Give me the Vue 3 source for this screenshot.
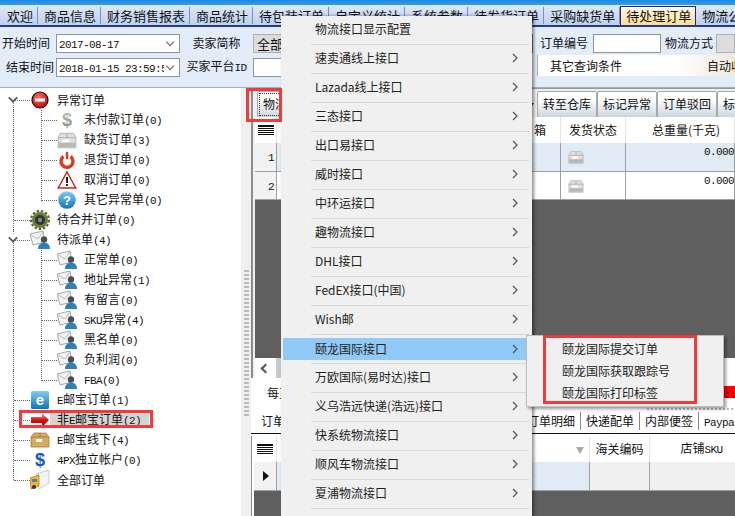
<script setup>
import { h } from 'vue'

const Tx = (p) =>
  (p.t.match(/[\x00-\x7f]+|[^\x00-\x7f]+/g) || []).map((s) =>
    /[\x00-\x7f]/.test(s) ? h('span', { class: 'lat' }, s) : s
  )
Tx.props = ['t']

const tabs = [
  { t: '欢迎' }, { t: '商品信息' }, { t: '财务销售报表' }, { t: '商品统计' }, { t: '待包装订单' },
  { t: '自定义统计' }, { t: '系统参数' }, { t: '待发货订单' }, { t: '采购缺货单' },
  { t: '待处理订单', on: true }, { t: '物流公司' }
]

const tree = [
  { t: '异常订单', i: 'stop', root: 1, exp: 1 },
  { t: '未付款订单(0)', i: 'dollar-g' },
  { t: '缺货订单(3)', i: 'box-g' },
  { t: '退货订单(0)', i: 'power' },
  { t: '取消订单(0)', i: 'warn' },
  { t: '其它异常单(0)', i: 'help', end: 1 },
  { t: '待合并订单(0)', i: 'gear', root: 1 },
  { t: '待派单(4)', i: 'mail', root: 1, exp: 1 },
  { t: '正常单(0)', i: 'mail' },
  { t: '地址异常(1)', i: 'mail' },
  { t: '有留言(0)', i: 'mail' },
  { t: 'SKU异常(4)', i: 'mail' },
  { t: '黑名单(0)', i: 'mail' },
  { t: '负利润(0)', i: 'mail' },
  { t: 'FBA(0)', i: 'mail', end: 1 },
  { t: 'E邮宝订单(1)', i: 'ie', root: 1 },
  { t: '非E邮宝订单(2)', i: 'arrow', root: 1, sel: 1 },
  { t: 'E邮宝线下(4)', i: 'box-t', root: 1 },
  { t: '4PX独立帐户(0)', i: 'dollar-b', root: 1 },
  { t: '全部订单', i: 'truck', root: 1, end: 1 }
]

const menu = [
  { t: '物流接口显示配置' }, { t: '速卖通线上接口', sub: 1 }, { t: 'Lazada线上接口', sub: 1 },
  { t: '三态接口', sub: 1 }, { t: '出口易接口', sub: 1 }, { t: '威时接口', sub: 1 },
  { t: '中环运接口', sub: 1 }, { t: '趣物流接口', sub: 1 }, { t: 'DHL接口', sub: 1 },
  { t: 'FedEX接口(中国)', sub: 1 }, { t: 'Wish邮', sub: 1 }, { t: '颐龙国际接口', sub: 1, on: 1 },
  { t: '万欧国际(易时达)接口', sub: 1 }, { t: '义乌浩远快递(浩远)接口', sub: 1 },
  { t: '快系统物流接口', sub: 1 }, { t: '顺风车物流接口', sub: 1 }, { t: '夏浦物流接口', sub: 1 },
  { t: '', sub: 0 }
]

const submenu = ['颐龙国际提交订单', '颐龙国际获取跟踪号', '颐龙国际打印标签']
const lowerTabs = ['订单明细', '快递配单', '内部便签', 'Paypal']
</script>

<template>
  <div class="app">
    <svg class="sprite" width="0" height="0">
      <defs>
        <radialGradient id="gr" cx=".4" cy=".3" r=".8"><stop offset="0" stop-color="#ff6a5a"/><stop offset="1" stop-color="#c80000"/></radialGradient>
        <linearGradient id="gb" x1="0" y1="0" x2="0" y2="1"><stop offset="0" stop-color="#7fd0f0"/><stop offset="1" stop-color="#1072b8"/></linearGradient>
        <linearGradient id="ga" x1="0" y1="0" x2="0" y2="1"><stop offset="0" stop-color="#f7b0a0"/><stop offset=".5" stop-color="#d81010"/><stop offset="1" stop-color="#8c0000"/></linearGradient>
        <linearGradient id="gd" x1="0" y1="0" x2="0" y2="1"><stop offset="0" stop-color="#c4c8c4"/><stop offset="1" stop-color="#7e847e"/></linearGradient>
        <symbol id="stop" viewBox="0 0 20 20"><circle cx="10" cy="10" r="8" fill="url(#gr)" stroke="#111" stroke-width="1.200"/><rect x="5" y="8.500" width="10" height="3" fill="#fff"/></symbol>
        <symbol id="dollar-g" viewBox="0 0 20 20"><text x="10" y="16" text-anchor="middle" font-family="Liberation Sans" font-weight="700" font-size="18" fill="url(#gd)">$</text></symbol>
        <symbol id="box-g" viewBox="0 0 18 18"><path d="M3 3h12l2 4v9H1V7z" fill="#e0e0e0" stroke="#b0b0b0" stroke-width=".8"/><path d="M1 7h16M9 3v4" stroke="#b0b0b0"/><rect x="1.500" y="11.500" width="15" height="4" fill="#b8b8b8"/><rect x="5" y="8.500" width="6" height="2.500" fill="#fff"/></symbol>
        <symbol id="power" viewBox="0 0 20 20"><path d="M6.500 6.500a6 6 0 1 0 7 0" fill="none" stroke="#e2361f" stroke-width="3.400"/><rect x="8.800" y="2" width="2.400" height="7" fill="#e2361f"/></symbol>
        <symbol id="warn" viewBox="0 0 20 20"><path d="M10 2 18.800 18H1.200z" fill="#fff" stroke="#c4281c" stroke-width="1.500"/><path d="M10 7v6" stroke="#222" stroke-width="2"/><rect x="9" y="14" width="2" height="2" fill="#222"/></symbol>
        <symbol id="help" viewBox="0 0 20 20"><circle cx="10" cy="10" r="8.800" fill="url(#gb)"/><text x="10" y="15" text-anchor="middle" font-family="Liberation Sans" font-weight="700" font-size="13" fill="#fff">?</text></symbol>
        <symbol id="gear" viewBox="0 0 20 20"><circle cx="10" cy="10" r="8" fill="#6c7d3a"/><circle cx="10" cy="10" r="9" fill="none" stroke="#55622c" stroke-width="2" stroke-dasharray="2.500 1.800"/><circle cx="10" cy="10" r="5" fill="#333"/><circle cx="10" cy="10" r="2.200" fill="#888"/></symbol>
        <symbol id="mail" viewBox="0 0 20 20"><path d="M0 4 13 1l2 11-12 3z" fill="#f2f3f4" stroke="#8f9498" stroke-width=".8"/><path d="M.5 4.500 8 9l5-7.500" fill="none" stroke="#aab0b4" stroke-width=".8"/><circle cx="14" cy="9.500" r="3.200" fill="#4b4f52"/><path d="M8 19c0-4.500 2.500-6.300 6-6.300s6 1.800 6 6.300z" fill="#2f80b4"/></symbol>
        <symbol id="ie" viewBox="0 0 20 20"><rect x="1" y="1" width="18" height="18" rx="1.500" fill="url(#gb)"/><text x="10" y="15" text-anchor="middle" font-family="Liberation Sans" font-weight="700" font-size="15" fill="#fff">e</text></symbol>
        <symbol id="arrow" viewBox="0 0 20 20"><path d="M1 7h11V3l7 7-7 7v-4H1z" fill="url(#ga)"/></symbol>
        <symbol id="box-t" viewBox="0 0 20 20"><path d="M4 3h12l3 4v10H1V7z" fill="#d8ab62" stroke="#a97f3c" stroke-width=".8"/><path d="M1 7h18M10 3v4" stroke="#a97f3c"/><rect x="6" y="9" width="6" height="3" fill="#fff"/></symbol>
        <symbol id="dollar-b" viewBox="0 0 20 20"><text x="10" y="16" text-anchor="middle" font-family="Liberation Sans" font-weight="700" font-size="18" fill="#1458c4">$</text></symbol>
        <symbol id="truck" viewBox="0 0 20 20"><path d="M6 4 19 0v13L9 19z" fill="#f4f4f4" stroke="#b8b8b8" stroke-width=".7"/><path d="M0 8l9-3v11l-8 3z" fill="#edb53a" stroke="#a87a18" stroke-width=".7"/><rect x="2" y="9" width="5" height="3" fill="#5b7fa0"/><circle cx="4" cy="17" r="2" fill="#333"/></symbol>
      </defs>
    </svg>

    <div class="topline"></div>
    <nav class="tabs">
      <span v-for="tab in tabs" :key="tab.t" class="tab" :class="{ on: tab.on }">{{ tab.t }}</span>
    </nav>

    <section class="filter">
      <label class="lb lb1">开始时间</label>
      <div class="inp date"><Tx t="2017-08-17" /><i class="chev"></i></div>
      <label class="lb mid">卖家简称</label>
      <div class="pick">全部</div>
      <div class="gapcell"></div>
      <label class="lb">订单编号</label>
      <div class="inp"></div>
      <label class="lb lb3">物流方式</label>
      <div class="pick"></div>

      <label class="lb lb2">结束时间</label>
      <div class="inp date"><Tx t="2018-01-15 23:59:59" /><i class="chev"></i></div>
      <label class="lb mid"><Tx t="买家平台ID" /></label>
      <div class="inp"></div>
      <div></div>
      <div class="query"><span>其它查询条件</span><span class="auto">自动收</span></div>
    </section>

    <main class="main">
      <aside class="tree">
        <div
          v-for="r in tree"
          :key="r.t"
          class="row"
          :class="{ root: r.root, child: !r.root, end: r.end, chosen: r.sel }"
        >
          <i class="hline"></i>
          <i v-if="r.exp" class="exp"></i>
          <svg class="ico"><use :href="'#' + r.i" /></svg>
          <span class="tx"><Tx :t="r.t" /></span>
        </div>
      </aside>

      <div class="split"><i class="dots"></i></div>

      <div class="content">
        <section class="upper">
          <div class="toolbar">
            <button class="btn first">物流接口</button>
            <span class="ddarrow"></span>
            <button class="btn">转至仓库</button>
            <button class="btn">标记异常</button>
            <button class="btn">订单驳回</button>
            <button class="btn">标记发货</button>
          </div>
          <div class="grid">
            <div class="c hd rh"><i class="lines"></i></div>
            <div class="c hd"></div>
            <div class="c hd hleft">箱</div>
            <div class="c hd">发货状态</div>
            <div class="c hd hwt">总重量(千克)</div>

            <div class="c rh num"><Tx t="1" /></div>
            <div class="c blue"></div>
            <div class="c blue"></div>
            <div class="c blue st"><svg class="boxi"><use href="#box-g" /></svg></div>
            <div class="c blue wt"><Tx t="0.000" /></div>

            <div class="c rh num"><Tx t="2" /></div>
            <div class="c"></div>
            <div class="c"></div>
            <div class="c st"><svg class="boxi"><use href="#box-g" /></svg></div>
            <div class="c wt"><Tx t="0.000" /></div>
          </div>
          <div class="dark"></div>
          <div class="hscroll"><span class="larr"></span><span class="thumb"></span></div>
        </section>

        <div class="pager">
          <span>每页</span>
          <span class="redbar"><Tx t="::" /></span>
        </div>
        <div class="hdots"></div>

        <nav class="ltabs">
          <span class="lt lfirst">订单</span>
          <span v-for="t in lowerTabs" :key="t" class="lt"><Tx :t="t" /></span>
        </nav>

        <section class="lower">
          <div class="grid2">
            <div class="c hd rh"><i class="lines"></i></div>
            <div class="c hd filt"><i class="tri"></i></div>
            <div class="c hd">海关编码</div>
            <div class="c hd hsku"><span>店铺<Tx t="SKU" /></span></div>
            <div class="c rh"><i class="cur"></i></div>
            <div class="c blue"></div>
            <div class="c gray"></div>
            <div class="c gray"></div>
          </div>
          <div class="dark"></div>
        </section>
      </div>
    </main>

    <!-- context menu, lying over the page -->
    <div class="menu">
      <div v-for="(m, i) in menu" :key="i" class="mrow">
        <div class="mi" :class="{ on: m.on }">
          <span class="mt">{{ m.t }}</span>
          <svg v-if="m.sub" class="marr" width="6" height="10" viewBox="0 0 6 10"><path d="M1 1l4 4-4 4" fill="none" stroke="#555" stroke-width="1.200"/></svg>
        </div>
      </div>
    </div>
    <div class="submenu">
      <div v-for="s in submenu" :key="s" class="si">{{ s }}</div>
    </div>

    <!-- red annotation boxes -->
    <i class="mark m1"></i>
    <i class="mark m2"></i>
    <i class="mark m3"></i>
  </div>
</template>

<style scoped>
.app {
  position: relative;
  width: 735px;
  height: 516px;
  overflow: hidden;
  display: flex;
  flex-direction: column;
  background: #f0f0f0;
  color: #111;
  font: 12px/1.2 "Noto Sans CJK SC", "Liberation Sans", sans-serif;
}
.sprite { position: absolute; }
.topline { height: 5px; flex: none; background: linear-gradient(#1a8ae0, #3a9ce6); }

.tabs {
  height: 22px;
  flex: none;
  display: flex;
  padding-left: 1px;
  overflow: hidden;
  background: linear-gradient(#dfe9f8, #bcd0ee);
  border-bottom: 2px solid #2a3a80;
  box-shadow: 0 1px 0 #e9b25a;
  box-sizing: border-box;
  font-size: 13px;
  line-height: 21px;
}
.tab {
  flex: none;
  padding: 0 4px 0 6px;
  border-right: 1px solid #7f8fb0;
  height: 17px;
  line-height: 17px;
  margin-top: 2px;
  white-space: nowrap;
}
.tab.on {
  height: 21px;
  width: 76px;
  margin-top: 1px;
  line-height: 18px;
  padding: 0 0 0 5px;
  background: linear-gradient(#fff8e4, #ffdc8a);
  border: 1px solid #1a2a80;
  border-bottom: 0;
  box-sizing: border-box;
}

.filter {
  height: 61px;
  flex: none;
  box-sizing: border-box;
  padding-top: 7px;
  background: #e3ecf9;
  border-bottom: 1px solid #a8adb8;
  display: grid;
  grid-template-columns: 56px 124px 73px 60px 227px 53px 68px 55px 19px;
  grid-template-rows: 19px 19px;
  row-gap: 5px;
  align-items: center;
}
.lb { white-space: nowrap; }
.lb1 { padding-left: 2px; }
.lb2 { padding-left: 6px; }
.lb3 { padding-left: 4px; }
.mid { text-align: center; }
.inp {
  height: 19px;
  box-sizing: border-box;
  background: #fff;
  border: 1px solid #8f939a;
  position: relative;
  overflow: hidden;
}
.date {
  padding-left: 2px;
  line-height: 15px;
  white-space: nowrap;
}
.chev {
  position: absolute;
  right: 1px;
  top: 1px;
  width: 14px;
  height: 15px;
  background: #fff;
}
.chev::after {
  content: "";
  position: absolute;
  left: 3px;
  top: 3px;
  width: 5px;
  height: 5px;
  border-right: 1px solid #666;
  border-bottom: 1px solid #666;
  transform: rotate(45deg);
}
.pick {
  height: 19px;
  box-sizing: border-box;
  background: #dcdcdc;
  border: 1px solid #b0b0b0;
  padding-left: 3px;
  line-height: 17px;
  font-size: 13px;
}
.gapcell { height: 19px; border-right: 1px solid #777; margin-right: 7px; }
.query {
  grid-column: 6 / 10;
  height: 21px;
  margin: -3px 0 0 -3px;
  align-self: start;
  box-sizing: border-box;
  padding: 0 0 0 12px;
  display: flex;
  justify-content: space-between;
  line-height: 21px;
  overflow: hidden;
  white-space: nowrap;
  font-size: 12px;
  background: linear-gradient(90deg, #fff 70%, #f0e8da);
  border-left: 1px solid #aaa;
}
.auto { width: 28px; overflow: hidden; flex: none; }

.main { flex: 1; min-height: 0; display: flex; }

.tree { width: 241px; flex: none; background: #fff; padding-top: 2px; box-sizing: border-box; overflow: hidden; }
.row { position: relative; height: 20px; display: flex; align-items: center; }
.row.root { padding-left: 30px; }
.row.child { padding-left: 57px; }
.row::before {
  content: "";
  position: absolute;
  left: 13px;
  top: 0;
  bottom: 0;
  border-left: 1px dotted #666;
}
.row:first-child::before { top: 10px; }
.row.root.end::before { bottom: 10px; }
.hline { position: absolute; top: 10px; border-top: 1px dotted #666; }
.root .hline { left: 14px; width: 16px; }
.child .hline { left: 41px; width: 16px; }
.child .hline::before {
  content: "";
  position: absolute;
  left: 0;
  top: -11px;
  height: 21px;
  border-left: 1px dotted #666;
}
.child.end .hline::before { height: 11px; }
.exp {
  position: absolute;
  left: 9px;
  top: 4px;
  width: 6px;
  height: 6px;
  background: #fff;
  border-right: 2px solid #555;
  border-bottom: 2px solid #555;
  transform: rotate(45deg) scale(.85);
}
.ico { width: 20px; height: 20px; flex: none; position: relative; }
.tx { margin-left: 7px; white-space: nowrap; position: relative; }
.row.chosen .tx { margin-left: 0; padding: 0 8px 0 7px; background: #d4d4d4; line-height: 14px; }

.split { width: 10px; flex: none; position: relative; }
.dots {
  position: absolute;
  left: 3px;
  top: 182px;
  width: 5px;
  height: 146px;
  background: repeating-linear-gradient(#bbb 0 2px, transparent 2px 4px);
}

.content { flex: 1; min-width: 0; display: flex; flex-direction: column; background: #fff; }

.upper {
  height: 290px;
  flex: none;
  display: flex;
  flex-direction: column;
  box-sizing: border-box;
  background: #f0f0f0;
  border-left: 2px solid #8c8c8c;
  padding-left: 2px;
  overflow: hidden;
}
.toolbar { height: 29px; flex: none; display: flex; align-items: flex-start; padding: 2px 0 0 2px; border-top: 1px solid #9a9a9a; box-sizing: border-box; }
.btn {
  flex: none;
  width: 60px;
  height: 27px;
  padding: 0;
  margin: 0;
  font: inherit;
  color: #111;
  border: 1px solid #a8a8a8;
  border-radius: 2px;
  background: linear-gradient(#fff 30%, #cdd6de);
}
.btn.first { outline: 1px dotted #333; outline-offset: -3px; width: 60px; }
.ddarrow {
  width: 0;
  height: 0;
  flex: none;
  margin: 12px 3px 0 211px;
  border: 3px solid transparent;
  border-top: 4px solid #222;
}

.grid {
  display: grid;
  grid-template-columns: 22px 255px 29px 65px 109px;
  grid-template-rows: 26px 29px 28px;
  flex: none;
}
.c {
  background: #fff;
  border-right: 1px solid #a0a0a0;
  border-bottom: 1px solid #a0a0a0;
  box-sizing: border-box;
  overflow: hidden;
  white-space: nowrap;
}
.hd { display: flex; align-items: center; justify-content: center; border-bottom: 0; border-right: 1px solid #e4e4e4; }
.hleft { justify-content: flex-start; padding-left: 2px; }
.hwt { padding-left: 12px; }
.hsku { padding-left: 18px; }
.rh { background: #f2f2f2; }
.hd.rh { background: #fff; }
.blue { background: #e0ebf5; }
.gray { background: #f0f0f0; }
.num { text-align: right; padding: 6px 2px 0 0; }
.st { padding: 6px 0 0 7px; }
.boxi { width: 16px; height: 16px; }
.wt { padding: 0; text-align: right; }
.lines {
  width: 16px;
  height: 9px;
  border-top: 1px solid #111;
  background: repeating-linear-gradient(#111 0 1px, #fff 1px 2px);
}
.dark { flex: 1; background: #5f5f5f; }
.hscroll { height: 20px; flex: none; display: flex; background: #fff; position: relative; }
.larr {
  width: 5px;
  height: 5px;
  margin: 7px 7px 0 7px;
  border-left: 2px solid #555;
  border-bottom: 2px solid #555;
  transform: rotate(45deg);
}
.thumb { width: 9px; background: #c8c8c8; }

.pager {
  height: 30px;
  flex: none;
  display: flex;
  justify-content: space-between;
  padding: 8px 0 0 16px;
  box-sizing: border-box;
  line-height: 14px;
}
.redbar { width: 11px; height: 12px; background: #f00; overflow: hidden; }
.hdots {
  height: 2px;
  flex: none;
  margin-left: 396px;
  background: repeating-linear-gradient(90deg, #bbb 0 2px, transparent 2px 4px);
}
.ltabs {
  height: 24px;
  flex: none;
  display: flex;
  box-sizing: border-box;
  padding-left: 10px;
  border-bottom: 1px solid #111;
  line-height: 22px;
  white-space: nowrap;
  overflow: hidden;
}
.lt { flex: none; padding: 0 5px 0 5px; border-right: 1px solid #888; height: 18px; margin-top: 2px; line-height: 18px; }
.lfirst { width: 261px; padding-left: 0; border: 0; box-sizing: border-box; margin-right: 0; }

.lower {
  flex: 1;
  min-height: 0;
  margin-top: 2px;
  display: flex;
  flex-direction: column;
  border-left: 1px solid #8c8c8c;
  padding-left: 2px;
}
.grid2 {
  display: grid;
  grid-template-columns: 23px 313px 60px 86px;
  grid-template-rows: 26px 29px;
  flex: none;
  margin-left: 0;
}
.filt { justify-content: flex-end; padding-right: 5px; }
.tri { width: 0; height: 0; border: 4px solid transparent; border-top: 7px solid #aaa; margin-top: 7px; }
.cur {
  display: block;
  width: 0;
  height: 0;
  margin: 9px 0 0 9px;
  border: 5px solid transparent;
  border-left: 6px solid #111;
  border-right: 0;
}

.menu {
  position: absolute;
  left: 281px;
  top: 16px;
  width: 251px;
  height: 510px;
  background: #f0f0f0;
  box-shadow: 2px 0 3px rgba(0, 0, 0, .45);
  padding: 0 3px 0 2px;
  box-sizing: border-box;
  overflow: hidden;
}
.mrow { height: 29px; box-sizing: border-box; padding-top: 3px; position: relative; }
.mrow:first-child { height: 28px; padding-top: 2px; }
.mrow + .mrow::before {
  content: "";
  position: absolute;
  left: 28px;
  right: 0;
  top: 0;
  border-top: 1px solid #d7d7d7;
}
.mi {
  height: 22px;
  display: flex;
  align-items: center;
  justify-content: space-between;
  padding: 0 11px 0 32px;
  color: #222;
  line-height: 22px;
  white-space: nowrap;
}
.mi.on { background: #91c9f7; margin-top: 1px; height: 22px; }
.marr { flex: none; }

.submenu {
  position: absolute;
  left: 526px;
  top: 335px;
  width: 198px;
  height: 72px;
  box-sizing: border-box;
  padding: 2px 0 0 35px;
  background: #f0f0f0;
  border: 1px solid #bdbdbd;
  box-shadow: 2px 2px 3px rgba(0, 0, 0, .4);
}
.si { height: 22px; line-height: 22px; color: #222; white-space: nowrap; }

.mark { position: absolute; box-sizing: border-box; border: 3px solid #f23a3a; pointer-events: none; }
.m1 { left: 246px; top: 88px; width: 36px; height: 34px; }
.m2 { left: 19px; top: 410px; width: 134px; height: 18px; }
.m3 { left: 543px; top: 335px; width: 154px; height: 69px; }
</style>

<style>
html, body { margin: 0; background: #f0f0f0; }
.lat { font-family: "Liberation Mono", monospace; font-size: 11px; letter-spacing: -.6px; }
</style>
